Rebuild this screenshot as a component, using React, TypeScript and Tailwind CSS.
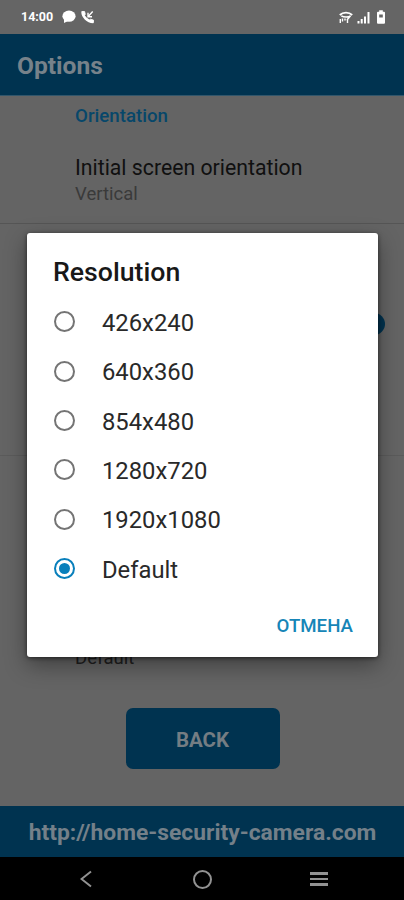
const options = ['426x240', '640x360', '854x480', '1280x720', '1920x1080', 'Default'];

function StatusBar() {
  return (
    <div className="flex h-[34px] items-center bg-[#656565] pl-[21px] pr-[19px] text-white">
      <span className="text-[12.5px] font-bold leading-none">14:00</span>
      <svg className="ml-[9px]" width="14" height="14" viewBox="0 0 14 14" fill="currentColor">
        <ellipse cx="7" cy="6.2" rx="6.6" ry="5.6" />
        <path d="M2 9v4l4-2z" />
      </svg>
      <svg className="ml-[5px]" width="14" height="14" viewBox="0 0 14 14" fill="none" stroke="currentColor">
        <path d="M1.600 1.500c-.1 5 4.600 10.200 10.600 10.400" strokeWidth="2.600" />
        <path d="M1 1.500h2.600l.7 2.800-1.500 1.500zM12.500 12.600v-2.500l-3-.9-1.800 1.500z" fill="currentColor" strokeWidth=".8" />
        <path d="M11.700 1.500L7.400 6.200M7 2.800v3.900h4" strokeWidth="1.400" />
      </svg>
      <div className="ml-auto flex items-center">
        <svg width="14" height="13" viewBox="0 0 14 13" fill="none" stroke="currentColor">
          <path d="M.8 4C4 .8 10 .8 13.200 4" strokeWidth="1.800" />
          <path d="M2.300 4.800c2.600 1.600 7 1.600 9.400 0M11.500 4.800L8 9" strokeWidth="1.500" />
          <path d="M1.300 12V8M3.500 10.500V7.500M6 9.500V7.500M8.500 12V9" strokeWidth="1.400" />
        </svg>
        <svg className="ml-[4px]" width="14" height="13" viewBox="0 0 14 13" fill="currentColor">
          <path d="M.5 10h2v2.500h-2zM3.700 8h2v4.500h-2zM7 5.500h2v7H7zM10.500 1h2v11.500h-2z" />
        </svg>
        <svg className="ml-[6px]" width="8" height="14" viewBox="0 0 8 14">
          <path d="M2.200.3h3.600v1.500H7q1 0 1 1v9.900q0 1-1 1H1q-1 0-1-1V2.800q0-1 1-1h1.200z" fill="currentColor" />
          <path d="M2.200 4.500h3.600v3H2.200z" fill="#656565" />
        </svg>
      </div>
    </div>
  );
}

function Dialog() {
  return (
    <div className="absolute left-[27px] top-[233px] flex h-[424px] w-[351px] flex-col rounded-[3px] bg-white px-[26px] shadow-[0_8px_22px_rgba(0,0,0,0.38),0_1px_4px_rgba(0,0,0,0.55)]">
      <h2 className="mt-[23px] whitespace-nowrap text-[26.700px] font-medium leading-[32px] text-[#181818]">Resolution</h2>
      <div className="mt-[9px] flex flex-col pl-px">
        {options.map((label) => {
          const selected = label === 'Default';
          return (
            <div key={label} className="flex h-[49.4px] items-center">
              <span className={`flex size-[21px] items-center justify-center rounded-full border-2 ${selected ? 'border-[#087fbb]' : 'border-[#747474]'}`}>
                {selected && <span className="size-[11px] rounded-full bg-[#087fbb]" />}
              </span>
              <span className="ml-[27px] pt-[4px] text-[23.800px] leading-none text-[#292929]">{label}</span>
            </div>
          );
        })}
      </div>
      <button className="-mr-px ml-auto mt-[21px] text-[18.7px] font-medium leading-[24px] text-[#1685b7]">ОТМЕНА</button>
    </div>
  );
}

export default function App() {
  return (
    <div className="relative flex h-[900px] w-[404px] flex-col overflow-hidden bg-[#646464] font-['Roboto','Liberation_Sans',sans-serif]">
      <StatusBar />
      <header className="flex h-[62px] items-center border-b border-[#31566b] bg-[#003350] pl-[17px] pt-[4px] text-[24.600px] font-bold text-[#77828a]">
        Options
      </header>
      <main className="relative h-[710px] text-[#101010]">
        <section className="h-[128px] border-b border-[#555555] pl-[75px]">
          <h3 className="pt-[8px] text-[18.700px] font-medium leading-[24px] text-[#07476a]">Orientation</h3>
          <p className="mt-[26px] whitespace-nowrap text-[21.250px] leading-[28px]">Initial screen orientation</p>
          <p className="text-[18.500px] leading-[25px] text-[#3a3a3a]">Vertical</p>
        </section>
        <section className="flex h-[232px] justify-end border-b border-[#5b5b5b] pr-[19px]">
          <span className="mt-[89px] size-[22px] rounded-full bg-[#003350]" />
        </section>
        <p className="mt-[190px] h-[25px] pl-[75px] text-[18.500px] leading-[25px] text-[#202020]">Default</p>
        <button className="ml-[126px] mt-[37px] block h-[61px] w-[154px] rounded-[7px] bg-[#003350] pr-px pt-[3px] text-[20.500px] font-bold text-[#747d83]">BACK</button>
      </main>
      <footer className="flex h-[51px] items-center justify-center whitespace-nowrap bg-[#003350] pl-px pt-[3px] text-[22.850px] font-bold text-[#748089]">
        http://home-security-camera.com
      </footer>
      <nav className="flex h-[43px] items-center bg-black pl-[80px] pt-px text-[#929292]">
        <svg width="12" height="18" viewBox="0 0 12 18" fill="none" stroke="currentColor" strokeWidth="2">
          <path d="M11 1.500L1.500 9 11 16.500" />
        </svg>
        <span className="ml-[101px] size-[19px] rounded-full border-2 border-current" />
        <span className="ml-[98px] flex w-[18px] flex-col gap-[3px]">
          <i className="h-[2.500px] bg-current" />
          <i className="h-[2.500px] bg-current" />
          <i className="h-[2.500px] bg-current" />
        </span>
      </nav>
      <Dialog />
    </div>
  );
}
